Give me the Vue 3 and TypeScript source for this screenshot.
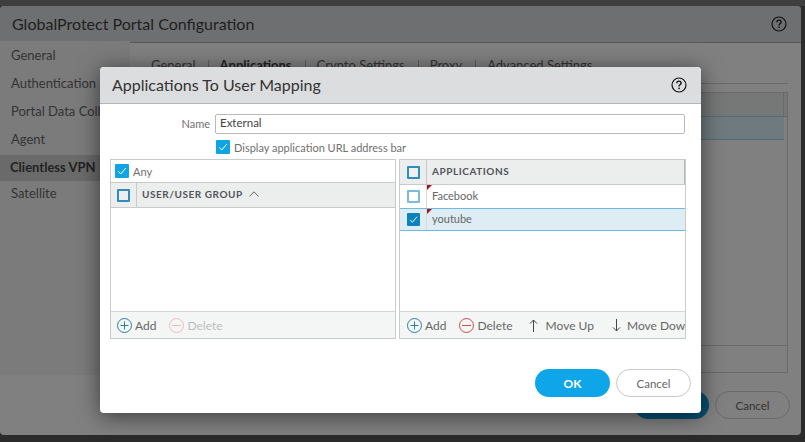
<script setup lang="ts">
const sideItems = ['General', 'Authentication', 'Portal Data Collection', 'Agent', 'Clientless VPN', 'Satellite']
const tabs = ['General', 'Applications', 'Crypto Settings', 'Proxy', 'Advanced Settings']
</script>

<template>
  <div class="stage">
    <div class="window">
      <header class="win-head">
        <span class="win-title">GlobalProtect Portal Configuration</span>
        <svg class="help" width="16" height="16" viewBox="0 0 16 16"><circle cx="8" cy="8" r="7" fill="none" stroke="#111" stroke-width="1.2" /><path d="M5.9 6.2c0-1.3 1-2.1 2.1-2.1s2.1.8 2.1 1.9c0 1.7-2.1 1.7-2.1 3.4" fill="none" stroke="#111" stroke-width="1.4" /><rect x="7.3" y="10.6" width="1.5" height="1.5" fill="#111" /></svg>
      </header>
      <div class="win-body">
        <nav class="side">
          <div v-for="s in sideItems" :key="s" class="side-item" :class="{ on: s === 'Clientless VPN' }">{{ s }}</div>
        </nav>
        <main class="win-main">
          <div class="tabs">
            <span v-for="t in tabs" :key="t" class="tab" :class="{ on: t === 'Applications' }">{{ t }}</span>
          </div>
          <div class="under-table">
            <div class="under-head"><div class="under-head-cell"></div></div>
            <div class="under-row"></div>
            <div class="under-fill"></div>
            <div class="under-foot"></div>
          </div>
        </main>
      </div>
      <footer class="win-foot">
        <span class="under-ok"></span>
        <span class="under-cancel">Cancel</span>
      </footer>
    </div>

    <section class="modal">
      <header class="modal-head">
        <span class="modal-title">Applications To User Mapping</span>
        <svg class="help" width="16" height="16" viewBox="0 0 16 16"><circle cx="8" cy="8" r="7" fill="none" stroke="#111" stroke-width="1.2" /><path d="M5.9 6.2c0-1.3 1-2.1 2.1-2.1s2.1.8 2.1 1.9c0 1.7-2.1 1.7-2.1 3.4" fill="none" stroke="#111" stroke-width="1.4" /><rect x="7.3" y="10.6" width="1.5" height="1.5" fill="#111" /></svg>
      </header>
      <div class="modal-body">
        <div class="name-row">
          <label class="name-label">Name</label>
          <div class="name-input">External</div>
        </div>
        <div class="url-row">
          <span class="cb checked"><svg width="14" height="14" viewBox="0 0 14 14"><path d="M3.4 7.4l2.4 2.6 5-6" fill="none" stroke="#fff" stroke-width="1" /></svg></span>
          <span class="cb-label">Display application URL address bar</span>
        </div>
        <div class="panels">
          <div class="panel">
            <div class="any-row">
              <span class="cb checked"><svg width="14" height="14" viewBox="0 0 14 14"><path d="M3.4 7.4l2.4 2.6 5-6" fill="none" stroke="#fff" stroke-width="1" /></svg></span>
              <span class="cb-label">Any</span>
            </div>
            <div class="grid-head">
              <div class="check-col"><span class="cb-box head"></span></div>
              <div class="head-label">USER/USER GROUP
                <svg class="sort" width="10" height="6" viewBox="0 0 10 6"><path d="M.6 5.4 5 .8l4.4 4.6" fill="none" stroke="#666" stroke-width="1" /></svg>
              </div>
            </div>
            <div class="grid-fill"></div>
            <div class="toolbar first">
              <span class="tool">
                <svg class="round" width="15" height="15" viewBox="0 0 15 15"><circle cx="7.5" cy="7.5" r="7" fill="none" stroke="#2a7ea8" /><path d="M3.5 7.5h8M7.5 3.5v8" stroke="#2a7ea8" /></svg>Add
              </span>
              <span class="tool off">
                <svg class="round" width="15" height="15" viewBox="0 0 15 15"><circle cx="7.5" cy="7.5" r="7" fill="none" stroke="#efbcbc" /><path d="M3 7.5h9" stroke="#efbcbc" /></svg>Delete
              </span>
            </div>
          </div>

          <div class="panel">
            <div class="grid-head tall">
              <div class="check-col"><span class="cb-box head"></span></div>
              <div class="head-label">APPLICATIONS</div>
            </div>
            <div class="row">
              <div class="check-col"><span class="cb-box"></span></div>
              <div class="cell"><i class="flag"></i>Facebook</div>
            </div>
            <div class="row selected">
              <div class="check-col"><span class="cb dark"><svg width="13" height="13" viewBox="0 0 14 14"><path d="M3.4 7.4l2.4 2.6 5-6" fill="none" stroke="#fff" stroke-width="1" /></svg></span></div>
              <div class="cell"><i class="flag"></i>youtube</div>
            </div>
            <div class="grid-fill"></div>
            <div class="toolbar">
              <span class="tool">
                <svg class="round" width="15" height="15" viewBox="0 0 15 15"><circle cx="7.5" cy="7.5" r="7" fill="none" stroke="#2a7ea8" /><path d="M3.5 7.5h8M7.5 3.5v8" stroke="#2a7ea8" /></svg>Add
              </span>
              <span class="tool">
                <svg class="round" width="15" height="15" viewBox="0 0 15 15"><circle cx="7.5" cy="7.5" r="7" fill="none" stroke="#cf4d4d" /><path d="M3 7.5h9" stroke="#cf4d4d" /></svg>Delete
              </span>
              <span class="tool move up">
                <svg class="arrow" width="9" height="13" viewBox="0 0 9 13"><path d="M4.5 13V1M1 4.6 4.5 1 8 4.6" fill="none" stroke="#444" /></svg>Move Up
              </span>
              <span class="tool move down">
                <svg class="arrow" width="9" height="13" viewBox="0 0 9 13"><path d="M4.5 0v12M1 8.4 4.5 12 8 8.4" fill="none" stroke="#444" /></svg>Move Down
              </span>
            </div>
          </div>
        </div>
        <div class="actions">
          <button class="btn ok">OK</button>
          <button class="btn cancel">Cancel</button>
        </div>
      </div>
    </section>
  </div>
</template>

<style>
html, body { margin: 0; background: #2b2b2b; }
</style>

<style scoped>
.stage {
  position: relative;
  width: 805px;
  height: 442px;
  box-sizing: border-box;
  padding: 6px 4px 7px 0;
  overflow: hidden;
  background: linear-gradient(#3e3e3e 0 6px, #2b2b2b 6px);
  font-family: Lato, "Open Sans", sans-serif;
  display: flex;
}
.window {
  flex: 1;
  display: flex;
  flex-direction: column;
  border-radius: 4px;
  background: #808080;
  overflow: hidden;
}
.win-head {
  height: 37px;
  flex: none;
  box-sizing: border-box;
  padding: 0 14px 0 12px;
  display: flex;
  align-items: center;
  justify-content: space-between;
  background: #6e6f70;
  border-bottom: 1px solid #565859;
}
.win-title { font-size: 16px; color: #1f1f1f; margin-bottom: 2px; }
.win-body { flex: 1; display: flex; min-height: 0; background: #7d7d7d; }
.side { width: 130px; flex: none; background: #7b7b7b; margin-top: -2px; }
.side-item {
  height: 28px;
  padding-left: 11px;
  display: flex;
  align-items: center;
  font-size: 13px;
  color: #333;
  white-space: nowrap;
  overflow: hidden;
}
.side-item.on {
  background: #6a6a6a;
  font-weight: 700;
  color: #222;
  padding: 0 0 3px 10px;
  box-sizing: border-box;
  height: 26px;
  margin-top: 2px;
}
.side-item:last-child { margin-top: -2px; }
.win-main { flex: 1; min-width: 0; padding: 0 13px 0 21px; display: flex; flex-direction: column; background: #808080; }
.tabs {
  height: 41px;
  flex: none;
  display: flex;
  align-items: flex-start;
  font-size: 13px;
  color: #333;
  padding-top: 17px;
  box-sizing: border-box;
  border-bottom: 1px solid #6a6a6a;
}
.tab { padding: 0 13px 0 11px; border-left: 1px solid #5e5e5e; line-height: 11px; white-space: nowrap; }
.tab:first-child { border-left: 0; padding: 0 12px 0 0; }
.tab.on { font-weight: 700; color: #222; }
.under-table {
  height: 279px;
  flex: none;
  margin-top: 8px;
  display: flex;
  flex-direction: column;
  border: 1px solid #6a6a6a;
}
.under-head { height: 24px; box-sizing: border-box; background: #767877; border-bottom: 1px solid #556a75; padding-right: 3px; }
.under-head-cell { height: 100%; border-right: 1px solid #686a6a; }
.under-row { height: 23px; box-sizing: border-box; margin-right: 3px; background: #6f7a7e; border-bottom: 1px solid #4f6c7c; }
.under-fill { flex: 1; }
.under-foot { height: 26px; border-top: 1px solid #6a6a6a; }
.win-foot {
  height: 60px;
  flex: none;
  box-sizing: border-box;
  padding: 16px 11px 0 0;
  display: flex;
  justify-content: flex-end;
  gap: 6px;
}
.under-ok { width: 75px; height: 28px; border-radius: 14px; background: #064f70; }
.under-cancel {
  width: 73px;
  height: 26px;
  border: 1px solid #6a6a6a;
  border-radius: 14px;
  display: flex;
  align-items: center;
  justify-content: center;
  font-size: 11.5px;
  color: #333;
}
.modal {
  position: absolute;
  left: 100px;
  top: 67px;
  width: 601px;
  height: 346px;
  display: flex;
  flex-direction: column;
  background: #fff;
  border-radius: 4px;
  box-shadow: 0 3px 22px rgba(0, 0, 0, 0.55);
  overflow: hidden;
}
.modal-head {
  height: 37px;
  flex: none;
  box-sizing: border-box;
  padding: 0 14px 0 12px;
  display: flex;
  align-items: center;
  justify-content: space-between;
  background: #dcddde;
  border-bottom: 1px solid #b4b5b6;
}
.modal-title { font-size: 16px; color: #333; margin-bottom: 2px; }
.modal-body { flex: 1; padding: 10px 16px 16px 10px; display: flex; flex-direction: column; min-height: 0; }
.name-row { display: flex; align-items: center; gap: 5px; height: 20px; }
.name-label { width: 100px; text-align: right; font-size: 11px; color: #707070; padding-bottom: 2px; }
.name-input {
  flex: 1;
  height: 20px;
  box-sizing: border-box;
  border: 1px solid #b9b9b9;
  border-radius: 2px;
  padding-left: 4px;
  font-size: 11.5px;
  line-height: 16px;
  color: #444;
}
.url-row { display: flex; align-items: center; gap: 4px; height: 14px; margin: 6px 0 5px 106px; }
.cb {
  width: 14px;
  height: 14px;
  border-radius: 1px;
  background: #0fa5e5;
  display: inline-flex;
  flex: none;
}
.cb.dark { background: #0c83bf; width: 13px; height: 13px; }
.cb-label { font-size: 11px; color: #707070; white-space: nowrap; }
.panels { display: flex; gap: 3px; height: 180px; flex: none; }
.panel {
  width: 287px;
  flex: none;
  box-sizing: border-box;
  display: flex;
  flex-direction: column;
  border: 1px solid #c8cbcc;
}
.panel:first-child { width: 286px; }
.any-row { height: 22px; display: flex; align-items: center; gap: 4px; padding-left: 4px; flex: none; }
.grid-head {
  height: 26px;
  flex: none;
  box-sizing: border-box;
  display: flex;
  background: #eceded;
  border-top: 1px solid #c8cbcc;
  border-bottom: 1px solid #c8cbcc;
}
.grid-head.tall { border-top: 0; height: 25px; border-right: 1px solid #b5b8b9; }
.check-col {
  width: 26px;
  flex: none;
  display: flex;
  align-items: center;
  justify-content: center;
  border-right: 1px solid #c8cbcc;
  box-sizing: border-box;
}
.panel:last-child .check-col { width: 27px; }
.cb-box {
  width: 13px;
  height: 13px;
  box-sizing: border-box;
  border: 2px solid #7dbbd8;
  border-radius: 1px;
  background: #fff;
  display: block;
}
.cb-box.head { border-color: #2f8dbb; background: #eef0f0; }
.head-label {
  padding: 0 0 3px 5px;
  display: flex;
  align-items: center;
  gap: 6px;
  font-size: 10px;
  letter-spacing: 0.55px;
  font-weight: 700;
  color: #50565a;
}
.sort { flex: none; margin-top: 1px; }
.row { height: 23px; display: flex; flex: none; box-sizing: border-box; }
.row.selected { background: #deecf4; border-top: 1px solid #6dbbe0; border-bottom: 1px solid #6dbbe0; }
.row .check-col { border-right-color: #d9d9d9; padding-bottom: 1px; }
.cell {
  position: relative;
  flex: 1;
  padding: 0 0 2px 5px;
  display: flex;
  align-items: center;
  font-size: 11px;
  color: #666;
}
.flag {
  position: absolute;
  left: 0;
  top: 0;
  width: 0;
  height: 0;
  border-top: 5px solid #b00d14;
  border-right: 5px solid transparent;
}
.grid-fill { flex: 1; min-height: 0; }
.toolbar {
  height: 27px;
  flex: none;
  box-sizing: border-box;
  display: flex;
  align-items: center;
  padding-left: 7px;
  gap: 13px;
  background: #f4f6f5;
  border-top: 1px solid #d2d5d6;
  font-size: 12px;
  color: #666;
  overflow: hidden;
  white-space: nowrap;
}
.toolbar.first { padding-left: 6px; }
.tool { display: inline-flex; align-items: center; gap: 3px; flex: none; }
.tool.off { color: #bdbdbd; }
.tool.up { gap: 8px; margin-left: 3px; }
.tool.down { gap: 6px; margin-left: 5px; }
.actions { margin-top: auto; display: flex; justify-content: flex-end; gap: 6px; margin-right: -6px; }
.btn {
  width: 75px;
  height: 28px;
  border-radius: 14px;
  font-family: inherit;
  font-size: 11.5px;
  padding: 0;
}
.btn.ok { background: #0fa5e9; border: 0; color: #fff; font-weight: 700; font-size: 12px; }
.btn.cancel { background: #fff; border: 1px solid #c9c9c9; color: #666; }
</style>
